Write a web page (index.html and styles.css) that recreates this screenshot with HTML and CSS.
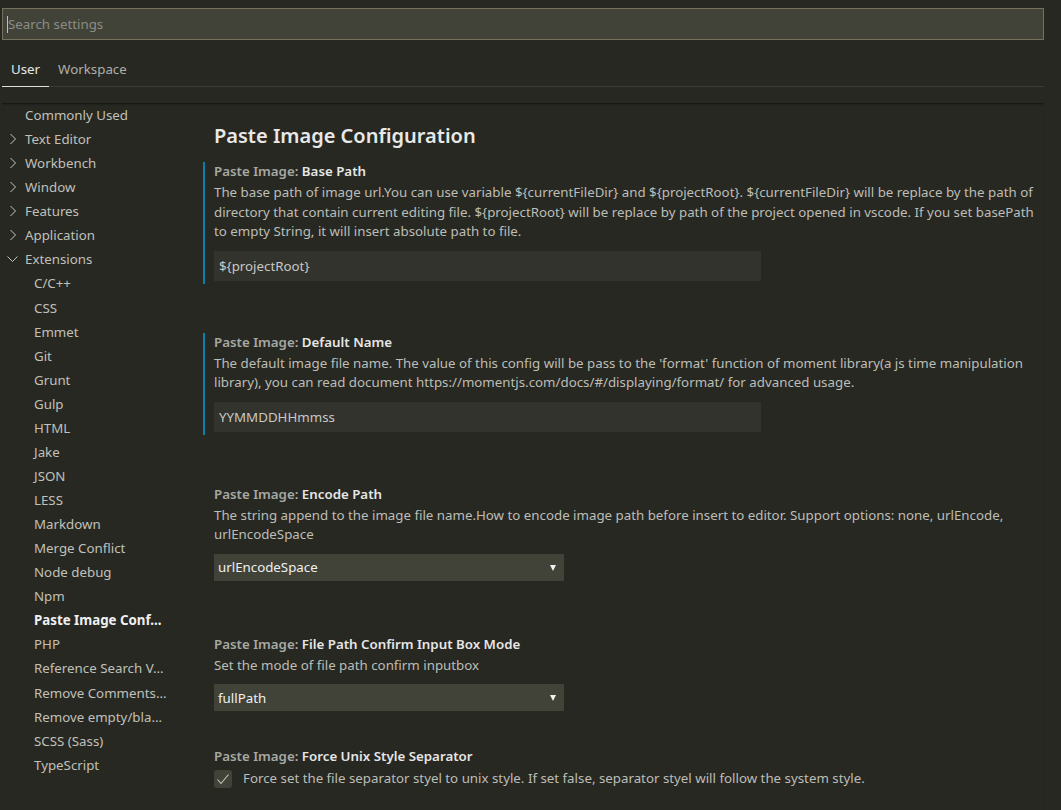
FILE: index.html
```html
<!DOCTYPE html>
<html>
<head>
<meta charset="utf-8">
<link rel="stylesheet" href="styles.css">
</head>
<body>
<div class="editor">
  <div class="search"><span class="caret"></span><span class="placeholder">Search settings</span></div>
  <div class="tabs">
    <span class="tab active">User</span>
    <span class="tab">Workspace</span>
  </div>
  <div class="gap"></div>
  <div class="body">
    <nav class="toc">
      <div class="item top"><span class="twist"></span>Commonly Used</div>
      <div class="item top"><span class="twist"><svg viewBox="0 0 16 16" width="16" height="16"><path d="M4.5 3l5 5-5 5" fill="none" stroke="#c5c5c5" stroke-width="1"/></svg></span>Text Editor</div>
      <div class="item top"><span class="twist"><svg viewBox="0 0 16 16" width="16" height="16"><path d="M4.5 3l5 5-5 5" fill="none" stroke="#c5c5c5" stroke-width="1"/></svg></span>Workbench</div>
      <div class="item top"><span class="twist"><svg viewBox="0 0 16 16" width="16" height="16"><path d="M4.5 3l5 5-5 5" fill="none" stroke="#c5c5c5" stroke-width="1"/></svg></span>Window</div>
      <div class="item top"><span class="twist"><svg viewBox="0 0 16 16" width="16" height="16"><path d="M4.5 3l5 5-5 5" fill="none" stroke="#c5c5c5" stroke-width="1"/></svg></span>Features</div>
      <div class="item top"><span class="twist"><svg viewBox="0 0 16 16" width="16" height="16"><path d="M4.5 3l5 5-5 5" fill="none" stroke="#c5c5c5" stroke-width="1"/></svg></span>Application</div>
      <div class="item top"><span class="twist"><svg viewBox="0 0 16 16" width="16" height="16"><path d="M1.5 5.5l5 5 5-5" fill="none" stroke="#c5c5c5" stroke-width="1"/></svg></span>Extensions</div>
      <div class="item child">C/C++</div>
      <div class="item child">CSS</div>
      <div class="item child">Emmet</div>
      <div class="item child">Git</div>
      <div class="item child">Grunt</div>
      <div class="item child">Gulp</div>
      <div class="item child">HTML</div>
      <div class="item child">Jake</div>
      <div class="item child">JSON</div>
      <div class="item child">LESS</div>
      <div class="item child">Markdown</div>
      <div class="item child">Merge Conflict</div>
      <div class="item child">Node debug</div>
      <div class="item child">Npm</div>
      <div class="item child selected">Paste Image Conf...</div>
      <div class="item child">PHP</div>
      <div class="item child">Reference Search V...</div>
      <div class="item child">Remove Comments...</div>
      <div class="item child">Remove empty/bla...</div>
      <div class="item child">SCSS (Sass)</div>
      <div class="item child">TypeScript</div>
    </nav>
    <main class="settings">
      <h1 class="title">Paste Image Configuration</h1>

      <section class="setting modified s1">
        <div class="label"><span class="cat">Paste Image: </span><span class="name">Base Path</span></div>
        <div class="desc">The base path of image url.You can use variable ${currentFileDir} and ${projectRoot}. ${currentFileDir} will be replace by the path of directory that contain current editing file. ${projectRoot} will be replace by path of the project opened in vscode. If you set basePath to empty String, it will insert absolute path to file.</div>
        <div class="input">${projectRoot}</div>
      </section>

      <section class="setting modified s2">
        <div class="label"><span class="cat">Paste Image: </span><span class="name">Default Name</span></div>
        <div class="desc">The default image file name. The value of this config will be pass to the 'format' function of moment library(a js time manipulation library), you can read document https://momentjs.com/docs/#/displaying/format/ for advanced usage.</div>
        <div class="input">YYMMDDHHmmss</div>
      </section>

      <section class="setting s3">
        <div class="label"><span class="cat">Paste Image: </span><span class="name">Encode Path</span></div>
        <div class="desc">The string append to the image file name.How to encode image path before insert to editor. Support options: none, urlEncode, urlEncodeSpace</div>
        <div class="select"><span>urlEncodeSpace</span><span class="arrow"></span></div>
      </section>

      <section class="setting s4">
        <div class="label"><span class="cat">Paste Image: </span><span class="name">File Path Confirm Input Box Mode</span></div>
        <div class="desc">Set the mode of file path confirm inputbox</div>
        <div class="select"><span>fullPath</span><span class="arrow"></span></div>
      </section>

      <section class="setting">
        <div class="label"><span class="cat">Paste Image: </span><span class="name">Force Unix Style Separator</span></div>
        <div class="check-row">
          <span class="checkbox"><svg viewBox="0 0 16 16" width="16" height="16"><path d="M2.5 8.5l3.5 4 7.5-9" fill="none" stroke="#c8c8c0" stroke-width="1.1"/></svg></span>
          <span class="desc inline">Force set the file separator styel to unix style. If set false, separator styel will follow the system style.</span>
        </div>
      </section>
    </main>
  </div>
</div>
</body>
</html>
```
FILE: styles.css
```css
html, body {
  margin: 0;
  padding: 0;
  background: #272822;
  height: 100%;
  overflow: hidden;
}
body {
  font-family: "Noto Sans", "Open Sans", sans-serif;
  font-size: 13.3px;
  color: #cccccc;
}
*, *::before, *::after {
  box-sizing: border-box;
}
.editor {
  margin-left: 2px;
  width: 1042px;
}
.search {
  margin-top: 8px;
  height: 32px;
  border: 1px solid #75715e;
  background: #414339;
  display: flex;
  align-items: center;
  padding-left: 4px;
}
.caret {
  width: 1px;
  height: 17px;
  background: #c0c0b0;
}
.placeholder {
  color: #8c8c84;
}
.tabs {
  display: flex;
  align-items: flex-end;
  height: 47px;
  border-bottom: 1px solid #3e3d32;
}
.tab {
  padding: 0 9px 7px;
  line-height: 20px;
  color: #b0b0a8;
  margin-bottom: -1px;
  border-bottom: 1px solid transparent;
}
.tab.active {
  color: #e8e8e8;
  border-bottom-color: #e0e0e0;
}
.gap {
  height: 16px;
}
.body {
  display: flex;
  box-shadow: inset 0 2px 2px -1px #141412;
  height: 707px;
}
.toc {
  width: 187px;
  flex: none;
  padding-left: 4px;
}
.item {
  height: 24.07px;
  color: #c0c0ba;
  white-space: nowrap;
  display: flex;
  align-items: center;
}
.twist {
  width: 19px;
  height: 16px;
  display: inline-flex;
}
.item.child {
  padding-left: 28px;
}
.item.selected {
  color: #f0f0f0;
  font-weight: 700;
}
.settings {
  flex: 1;
  padding: 19px 9px 0 14px;
}
.title {
  margin: 0 0 12px 11px;
  font-size: 20px;
  font-weight: 600;
  line-height: 28px;
  color: #e8e8e8;
}
.setting {
  padding: 0 0 3px 9px;
  border-left: 2px solid transparent;
}
.setting.modified {
  border-left-color: #0e7fad;
}
.s1 { margin-bottom: 49px; }
.s2 { margin-bottom: 50px; }
.s3 { margin-bottom: 51px; }
.s4 { margin-bottom: 33px; }
.label {
  line-height: 18px;
  font-weight: 600;
}
.cat {
  color: #a8a8a2;
}
.name {
  color: #e6e6e6;
}
.desc {
  line-height: 19.5px;
  color: #bdbdb7;
  margin-top: 3px;
}
.input {
  margin-top: 9px;
  width: 547px;
  height: 30px;
  line-height: 30px;
  background: #32332d;
  padding-left: 5px;
  color: #c8c8c4;
}
.select {
  margin-top: 9px;
  width: 350px;
  height: 27px;
  background: #414339;
  display: flex;
  align-items: center;
  justify-content: space-between;
  padding: 0 8px 0 4px;
  color: #f0f0f0;
}
.arrow {
  width: 0;
  height: 0;
  border-left: 3px solid transparent;
  border-right: 3px solid transparent;
  border-top: 6px solid #f0f0f0;
  margin-top: 1px;
}
.check-row {
  display: flex;
  align-items: center;
  margin-top: 4px;
}
.checkbox {
  width: 18px;
  height: 18px;
  background: #414339;
  border-radius: 3px;
  display: inline-flex;
  align-items: center;
  justify-content: center;
  margin-right: 11px;
}
.desc.inline {
  margin-top: 0;
}
```
